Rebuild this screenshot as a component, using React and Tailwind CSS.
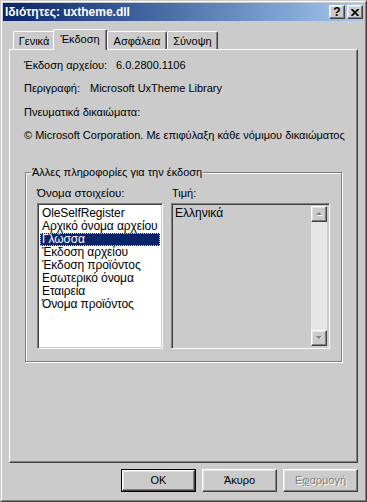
import React from "react";

const raised =
  "border border-t-white border-l-white border-r-[#404040] border-b-[#404040] shadow-[inset_-1px_-1px_#808080,inset_1px_1px_#e3e3e3]";
const sunken =
  "border border-t-[#808080] border-l-[#808080] border-r-white border-b-white shadow-[inset_1px_1px_#404040,inset_-1px_-1px_#cbcbcb]";

const items = [
  "OleSelfRegister",
  "Αρχικό όνομα αρχείου",
  "Γλώσσα",
  "Έκδοση αρχείου",
  "Έκδοση προϊόντος",
  "Εσωτερικό όνομα",
  "Εταιρεία",
  "Όνομα προϊόντος",
];

const Arrow = ({ up }) => (
  <svg width="7" height="4" viewBox="0 0 7 4" className="overflow-visible">
    <path d={up ? "M4 1 L7 4 L1 4 Z" : "M1 0 L7 0 L4 3 Z"} fill="#ffffff" />
    <path d={up ? "M3 0 L6 3 L0 3 Z" : "M0 0 L6 0 L3 3 Z"} fill="#808080" />
  </svg>
);

function Tab({ label, w, active }) {
  if (active) {
    return (
      <div
        className={`relative z-10 h-[21px] -mb-[1px] -ml-[2px] bg-[#cbcbcb] border-l border-t border-r border-l-white border-t-white border-r-[#404040] rounded-t-[2px] shadow-[inset_-1px_0_#808080] flex justify-center pt-[3px] ${w}`}
      >
        {label}
      </div>
    );
  }
  return (
    <div
      className={`h-[18px] border-l border-t border-r border-l-white border-t-white border-r-[#404040] rounded-t-[2px] shadow-[inset_-1px_0_#808080] flex justify-center pt-[3px] ${w}`}
    >
      {label}
    </div>
  );
}

function Button({ children, isDefault, disabled }) {
  const inner = (
    <div className={`h-full w-full flex items-center justify-center ${raised}`}>
      {children}
    </div>
  );
  if (isDefault) {
    return <div className="w-[75px] h-[23px] border border-black">{inner}</div>;
  }
  return (
    <div className={`w-[75px] h-[23px] ${disabled ? "text-[#808080] [text-shadow:1px_1px_#ffffff]" : ""}`}>
      {inner}
    </div>
  );
}

export default function App() {
  return (
    <div className="w-[367px] h-[502px] bg-[#cbcbcb] border border-t-[#cbcbcb] border-l-[#cbcbcb] border-r-[#404040] border-b-[#404040] font-['Liberation_Sans',Arial,sans-serif] text-[11px] text-black leading-[13px]">
      <div className="h-full p-[1px] border border-t-white border-l-white border-r-[#808080] border-b-[#808080] flex flex-col">
        {/* title bar */}
        <div className="h-[18px] bg-linear-to-r from-[#0a246a] to-[#a6caf0] flex items-center pl-[2px] pr-[1px]">
          <span className="flex-1 text-white font-bold text-[12px] leading-[18px]">
            Ιδιότητες: uxtheme.dll
          </span>
          <div className={`w-[16px] h-[14px] bg-[#cbcbcb] flex items-center justify-center font-bold text-[12px] leading-[12px] ${raised}`}>
            ?
          </div>
          <div className={`ml-[2px] w-[16px] h-[14px] bg-[#cbcbcb] flex items-center justify-center ${raised}`}>
            <svg width="8" height="7" viewBox="0 0 8 7">
              <path d="M0.5 0 L7.5 7 M7.5 0 L0.5 7" stroke="#000" strokeWidth="1.8" />
            </svg>
          </div>
        </div>

        {/* body */}
        <div className="flex-1 flex flex-col px-[6px] pt-[8px] pb-[7px]">
          <div className="h-[20px] flex items-end pl-[4px]">
            <Tab label="Γενικά" w="w-[42px]" />
            <Tab label="Έκδοση" w="w-[54px]" active />
            <Tab label="Ασφάλεια" w="w-[60px]" />
            <Tab label="Σύνοψη" w="w-[51px]" />
          </div>

          <div className="flex-1 border border-t-white border-l-white border-r-[#404040] border-b-[#404040] shadow-[inset_-1px_-1px_#808080] pt-[9px]">
            <div className="pl-[14px] flex flex-col">
              <div className="h-[13px] flex">
                <span className="w-[92px]">Έκδοση αρχείου:</span>
                <span>6.0.2800.1106</span>
              </div>
              <div className="h-[13px] mt-[10px] flex">
                <span className="w-[66px]">Περιγραφή:</span>
                <span>Microsoft UxTheme Library</span>
              </div>
              <div className="h-[13px] mt-[11px]">Πνευματικά δικαιώματα:</div>
              <div className="h-[13px] mt-[10px]">
                © Microsoft Corporation. Με επιφύλαξη κάθε νόμιμου δικαιώματος
              </div>
            </div>

            {/* group box */}
            <div className="relative ml-[15px] mt-[30px] w-[317px] h-[190px] border border-[#808080] shadow-[inset_1px_1px_#ffffff,1px_1px_#ffffff] pl-[11px] pt-[14px]">
              <span className="absolute -top-[7px] left-[5px] px-[1px] bg-[#cbcbcb]">
                Άλλες πληροφορίες για την έκδοση
              </span>
              <div className="flex gap-[8px]">
                <div className="w-[126px] flex flex-col">
                  <div className="h-[13px] text-[11.5px]">Όνομα στοιχείου:</div>
                  <div className={`mt-[3px] h-[146px] bg-white pt-[3px] px-[2px] text-[12px] tracking-[-0.1px] leading-[13px] ${sunken}`}>
                    {items.map((it) => (
                      <div
                        key={it}
                        className={`h-[13px] pl-[2px] whitespace-nowrap ${
                          it === "Γλώσσα"
                            ? "bg-[#0a246a] text-white outline outline-1 outline-dotted outline-[#d8d29a] -outline-offset-1"
                            : ""
                        }`}
                      >
                        {it}
                      </div>
                    ))}
                  </div>
                </div>
                <div className="w-[159px] flex flex-col">
                  <div className="h-[13px] pl-[1px]">Τιμή:</div>
                  <div className={`mt-[3px] h-[146px] p-[2px] flex ${sunken}`}>
                    <div className="flex-1 pl-[1px] pt-[1px] text-[12px] leading-[13px]">Ελληνικά</div>
                    <div className="w-[16px] flex flex-col bg-[#e6e6e6]">
                      <div className={`h-[16px] bg-[#cbcbcb] flex items-center justify-center ${raised}`}>
                        <Arrow up />
                      </div>
                      <div className="flex-1" />
                      <div className={`h-[16px] bg-[#cbcbcb] flex items-center justify-center ${raised}`}>
                        <Arrow />
                      </div>
                    </div>
                  </div>
                </div>
              </div>
            </div>
          </div>

          {/* buttons */}
          <div className="mt-[6px] flex justify-end gap-[6px]">
            <Button isDefault>OK</Button>
            <Button>Άκυρο</Button>
            <Button disabled>
              <span>
                Ε<span className="underline">φ</span>αρμογή
              </span>
            </Button>
          </div>
        </div>
      </div>
    </div>
  );
}
